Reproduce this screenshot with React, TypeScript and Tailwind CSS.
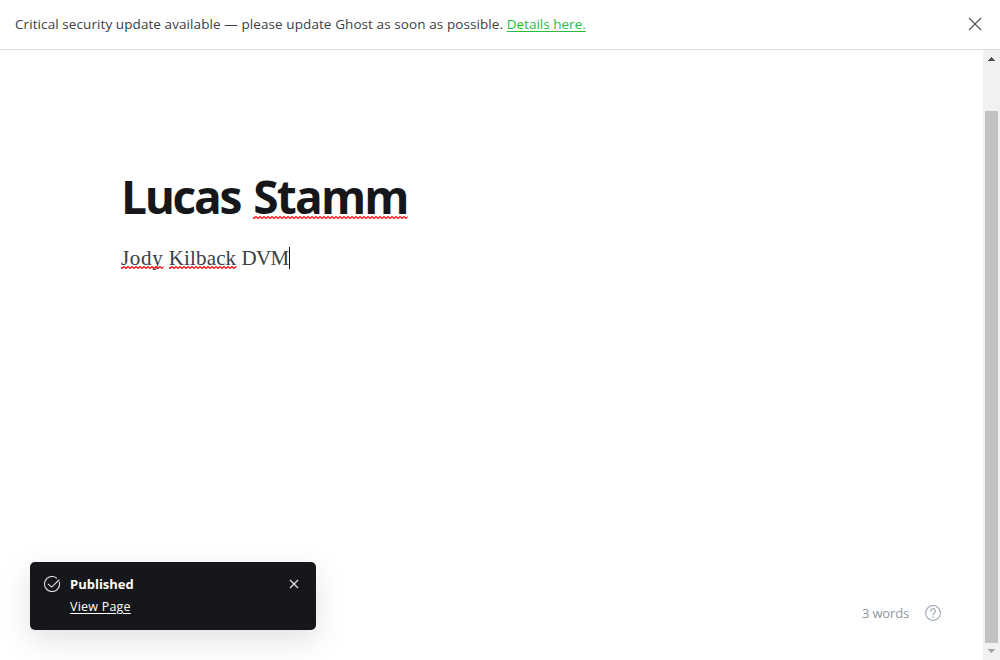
import type { ReactNode } from "react";

function Misspelled({ id, className, children }: { id: string; className: string; children: ReactNode }) {
  return (
    <span className="relative inline-block">
      {children}
      <svg className="absolute bottom-0 left-0 h-full w-full overflow-visible" aria-hidden="true">
        <defs>
          <pattern id={id} width="4" height="3" patternUnits="userSpaceOnUse">
            <path d="M-1 0.5 L1 2.5 L3 0.5 L5 2.5" fill="none" stroke="#ff0000" strokeWidth="1.1" />
          </pattern>
        </defs>
        <rect width="100%" height="3" fill={`url(#${id})`} className={className} />
      </svg>
    </span>
  );
}

function UpdateBanner() {
  return (
    <header className="flex h-[50px] shrink-0 items-center justify-between border-b border-[#dddddd] pr-[18px] pb-px pl-[15px]">
      <p className="text-[13.5px] leading-5 tracking-[0.085px] whitespace-nowrap text-[#394047]">
        <span>Critical security update available — please update Ghost as soon as possible.</span>{" "}
        <a className="tracking-[0.01px] text-[#2cbb40] underline underline-offset-2">Details here.</a>
      </p>
      <button aria-label="Close" className="text-[#495057]">
        <svg width="14" height="14" viewBox="0 0 14 14" fill="none" stroke="currentColor" strokeWidth="1.1">
          <path d="M1 1l12 12M13 1L1 13" />
        </svg>
      </button>
    </header>
  );
}

function Scrollbar() {
  return (
    <div className="flex w-[17px] shrink-0 flex-col items-center bg-[#f1f1f1]">
      <svg width="17" height="17" viewBox="0 0 17 17" className="shrink-0" shapeRendering="crispEdges">
        <path d="M5 11h7L8.5 7z" fill="#505050" />
      </svg>
      <div className="mt-11 h-[532px] w-[13px] shrink-0 bg-[#c1c1c1]" />
      <svg width="17" height="17" viewBox="0 0 17 17" className="shrink-0" shapeRendering="crispEdges">
        <path d="M5 6h7l-3.5 4z" fill="#a3a3a3" />
      </svg>
    </div>
  );
}

function Toast() {
  return (
    <div className="flex h-[68px] w-[286px] rounded-[5px] bg-[#15171a] pt-[14px] pr-4 pl-[14px] text-white shadow-[0_10px_30px_rgba(0,0,0,0.12)]">
      <svg width="16" height="16" viewBox="0 0 16 16" fill="none" stroke="#dedfe0" strokeWidth="1.1" strokeLinecap="round" className="shrink-0">
        <path d="M15.3 6.2A7.5 7.5 0 1 1 12.6 2.1" />
        <path d="M4.2 8.1l3.5 3L15 4" />
      </svg>
      <div className="ml-[10px] flex grow flex-col items-start text-[13px] leading-[22px]">
        <strong className="-mt-[3px] font-bold">Published</strong>
        <a className="mt-px text-[12.5px] font-medium tracking-[0.22px] underline underline-offset-2">View Page</a>
      </div>
      <button aria-label="Dismiss" className="mt-[3px] mr-px h-[10px]">
        <svg width="10" height="10" viewBox="0 0 10 10" fill="none" stroke="#e5e5e5" strokeWidth="1.2">
          <path d="M1 1l8 8M9 1L1 9" />
        </svg>
      </button>
    </div>
  );
}

export default function App() {
  return (
    <div className="flex h-[660px] w-[1000px] flex-col overflow-hidden bg-white font-['Open_Sans','Noto_Sans',sans-serif]">
      <UpdateBanner />
      <div className="flex min-h-0 grow">
        <main className="flex grow flex-col justify-between">
          <section className="pt-[116px] pl-[121px]">
            <h1 className="text-[46px] leading-[60px] font-bold tracking-[-1.8px] whitespace-nowrap text-[#15171a]">
              <span className="mr-[3px] tracking-[-2.3px]">Lucas</span>{" "}
              <Misspelled id="wave-title" className="translate-y-[50px]">Stamm</Misspelled>
            </h1>
            <div className="mt-4 flex h-8 items-center font-['Liberation_Serif',serif] text-[21px] leading-8 whitespace-nowrap text-[#394047]">
              <p>
                <span className="tracking-[0.7px]">
                  <Misspelled id="wave-first" className="translate-y-[24px]">Jody</Misspelled>
                </span>{" "}
                <span className="tracking-[0.15px]">
                  <Misspelled id="wave-last" className="translate-y-[24px]">Kilback</Misspelled>
                </span>{" "}
                <span className="tracking-[-0.7px]">DVM</span>
              </p>
              <span className="ml-px h-[22px] w-px bg-[#15171a]" />
            </div>
          </section>
          <footer className="flex items-end justify-between pr-[42px] pb-[30px] pl-[30px]">
            <Toast />
            <div className="mb-[7px] flex items-center text-[#95a1ad]">
              <span className="text-[13px] leading-5 tracking-[-0.15px] text-[#8e979f]">3 words</span>
              <svg width="16" height="16" viewBox="0.2 0.2 16.6 16.6" fill="none" stroke="currentColor" strokeWidth="1.1" strokeLinecap="round" className="ml-4">
                <circle cx="8.5" cy="8.5" r="7.7" />
                <path d="M6 6.6a2.5 2.5 0 1 1 3.7 2.1c-.8.4-1.2.9-1.2 1.8" />
                <circle cx="8.5" cy="12.6" r=".3" />
              </svg>
            </div>
          </footer>
        </main>
        <Scrollbar />
      </div>
    </div>
  );
}
